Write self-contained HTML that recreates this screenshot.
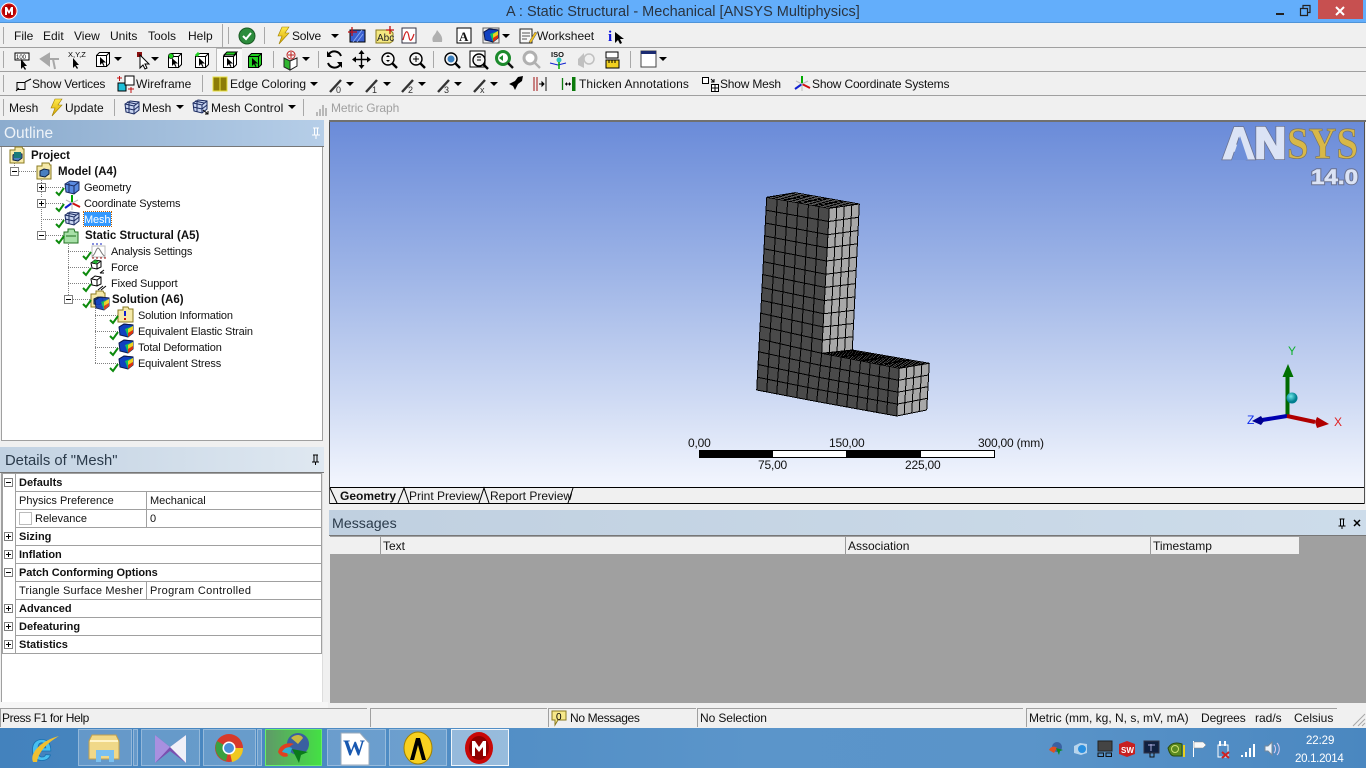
<!DOCTYPE html>
<html><head><meta charset="utf-8"><style>
html,body{margin:0;padding:0;width:1366px;height:768px;overflow:hidden;background:#f0f0f0;font-family:"Liberation Sans",sans-serif;font-size:12px;color:#111}
.a{position:absolute}
.t{position:absolute;white-space:nowrap;line-height:16px;font-size:12px}
.b{font-weight:bold}
.n{letter-spacing:-.15px}
.g{position:absolute;background:#a0a0a0}
.s{position:absolute;width:1px;background:#a8a8a8}
.c{position:absolute;background:#f0f0f0;border-top:1px solid #a0a0a0;border-left:1px solid #a0a0a0;height:18px;top:708px}
.r{position:absolute;height:1px;background:#a0a0a0;left:15px;width:307px}
.tb{position:absolute;top:729px;height:37px;box-sizing:border-box;border:1px solid rgba(255,255,255,.3);background:rgba(255,255,255,.17)}
</style></head><body>
<div class="a" style="left:0;top:0;width:1366px;height:23px;background:#63aefb;border-bottom:1px solid #4f94d8;box-sizing:border-box"></div>
<div class="t" style="left:506px;top:4px;font-size:14.5px;color:#2a3440">A : Static Structural - Mechanical [ANSYS Multiphysics]</div>
<div class="a" style="left:1318px;top:0;width:45px;height:19px;background:#c75050"></div>
<div class="a" style="left:0;top:47px;width:1366px;height:1px;background:#a0a0a0"></div>
<div class="a" style="left:0;top:71px;width:1366px;height:1px;background:#a0a0a0"></div>
<div class="a" style="left:0;top:95px;width:1366px;height:1px;background:#a0a0a0"></div>
<div class="a" style="left:329px;top:120px;width:1037px;height:2px;background:#707070"></div>
<div class="a" style="left:222px;top:24px;width:1px;height:23px;background:#a8a8a8"></div>
<div class="s" style="left:3px;top:27px;height:17px"></div><div class="s" style="left:228px;top:27px;height:17px"></div><div class="s" style="left:264px;top:27px;height:17px"></div>
<div class="s" style="left:3px;top:51px;height:17px"></div><div class="s" style="left:273px;top:51px;height:17px"></div><div class="s" style="left:318px;top:51px;height:17px"></div><div class="s" style="left:433px;top:51px;height:17px"></div><div class="s" style="left:630px;top:51px;height:17px"></div>
<div class="s" style="left:3px;top:75px;height:17px"></div><div class="s" style="left:202px;top:75px;height:17px"></div>
<div class="s" style="left:3px;top:99px;height:17px"></div><div class="s" style="left:114px;top:99px;height:17px"></div><div class="s" style="left:303px;top:99px;height:17px"></div>
<div class="a" style="left:216px;top:48px;width:26px;height:23px;background:#fafafa;border-left:1px solid #bbb;border-top:1px solid #bbb;box-sizing:border-box"></div>

<div class="t" style="left:14px;top:28px">File</div>
<div class="t" style="left:43px;top:28px">Edit</div>
<div class="t" style="left:74px;top:28px">View</div>
<div class="t" style="left:110px;top:28px">Units</div>
<div class="t" style="left:148px;top:28px">Tools</div>
<div class="t" style="left:188px;top:28px">Help</div>
<div class="t" style="left:292px;top:28px;letter-spacing:-.2px">Solve</div>
<div class="t" style="left:537px;top:28px">Worksheet</div>
<div class="t" style="left:32px;top:76px;letter-spacing:-.22px">Show Vertices</div>
<div class="t" style="left:136px;top:76px">Wireframe</div>
<div class="t" style="left:230px;top:76px">Edge Coloring</div>
<div class="t" style="left:579px;top:76px;letter-spacing:.1px">Thicken Annotations</div>
<div class="t" style="left:720px;top:76px;letter-spacing:-.2px">Show Mesh</div>
<div class="t" style="left:812px;top:76px;letter-spacing:-.18px">Show Coordinate Systems</div>
<div class="t" style="left:9px;top:100px">Mesh</div>
<div class="t" style="left:65px;top:100px">Update</div>
<div class="t" style="left:142px;top:100px">Mesh</div>
<div class="t" style="left:211px;top:100px;letter-spacing:.08px">Mesh Control</div>
<div class="t" style="left:331px;top:100px;color:#a0a0a0;letter-spacing:-.1px">Metric Graph</div>

<!-- Outline -->
<div class="a" style="left:0;top:120px;width:324px;height:27px;background:linear-gradient(90deg,#8cacce,#b6cee8);border-bottom:1px solid #777;box-sizing:border-box"></div>
<div class="t" style="left:4px;top:125px;font-size:15.500px;line-height:18px;color:#eef3f8">Outline</div>
<div class="a" style="left:1px;top:147px;width:322px;height:294px;background:#fff;border-left:1px solid #a0a0a0;border-right:1px solid #a0a0a0;border-bottom:1px solid #a0a0a0;box-sizing:border-box"></div>
<div class="a" style="left:84px;top:212px;width:27px;height:14px;background:#3399ff;outline:1px dotted #c06000;outline-offset:0"></div>
<div class="t b" style="left:31px;top:148px;font-size:11.500px">Project</div>
<div class="t b" style="left:58px;top:164px;font-size:11.500px">Model (A4)</div>
<div class="t n" style="left:84px;top:180px;font-size:11px">Geometry</div>
<div class="t n" style="left:84px;top:196px;font-size:11px">Coordinate Systems</div>
<div class="t n" style="left:84px;top:212px;font-size:11px;color:#fff">Mesh</div>
<div class="t b" style="left:85px;top:228px;font-size:11.500px">Static Structural (A5)</div>
<div class="t n" style="left:111px;top:244px;font-size:11px">Analysis Settings</div>
<div class="t n" style="left:111px;top:260px;font-size:11px">Force</div>
<div class="t n" style="left:111px;top:276px;font-size:11px">Fixed Support</div>
<div class="t b" style="left:112px;top:292px;font-size:11.500px">Solution (A6)</div>
<div class="t n" style="left:138px;top:308px;font-size:11px">Solution Information</div>
<div class="t n" style="left:138px;top:324px;font-size:11px">Equivalent Elastic Strain</div>
<div class="t n" style="left:138px;top:340px;font-size:11px">Total Deformation</div>
<div class="t n" style="left:138px;top:356px;font-size:11px">Equivalent Stress</div>

<!-- Details -->
<div class="a" style="left:0;top:447px;width:324px;height:26px;background:linear-gradient(90deg,#c2d2e2,#dfe8f1);border-bottom:1px solid #777;box-sizing:border-box"></div>
<div class="t" style="left:5px;top:452px;font-size:14.800px;line-height:18px;color:#2a3a4a">Details of "Mesh"</div>
<div class="a" style="left:1px;top:473px;width:322px;height:229px;background:#fff;border-left:1px solid #a0a0a0;border-right:1px solid #ddd;box-sizing:border-box"></div>
<div class="a" style="left:2px;top:473px;width:320px;height:1px;background:#a0a0a0"></div>
<div class="a" style="left:2px;top:653px;width:320px;height:1px;background:#a0a0a0"></div>
<div class="a" style="left:2px;top:473px;width:1px;height:181px;background:#a0a0a0"></div>
<div class="a" style="left:321px;top:473px;width:1px;height:181px;background:#a0a0a0"></div>
<div class="a" style="left:15px;top:473px;width:1px;height:181px;background:#a0a0a0"></div>
<div class="r" style="top:491px"></div><div class="r" style="top:509px"></div><div class="r" style="top:527px"></div><div class="r" style="top:545px"></div><div class="r" style="top:563px"></div><div class="r" style="top:581px"></div><div class="r" style="top:599px"></div><div class="r" style="top:617px"></div><div class="r" style="top:635px"></div>
<div class="a" style="left:146px;top:491px;width:1px;height:36px;background:#a0a0a0"></div>
<div class="a" style="left:146px;top:581px;width:1px;height:18px;background:#a0a0a0"></div>
<div class="a" style="left:19px;top:512px;width:11px;height:11px;border:1px solid #bbb"></div>
<div class="t b" style="left:19px;top:475px;font-size:11px">Defaults</div>
<div class="t" style="left:19px;top:493px;font-size:11px">Physics Preference</div>
<div class="t" style="left:150px;top:493px;font-size:11px">Mechanical</div>
<div class="t" style="left:35px;top:511px;font-size:11px">Relevance</div>
<div class="t" style="left:150px;top:511px;font-size:11px">0</div>
<div class="t b" style="left:19px;top:529px;font-size:11px">Sizing</div>
<div class="t b" style="left:19px;top:547px;font-size:11px">Inflation</div>
<div class="t b" style="left:19px;top:565px;font-size:11px;letter-spacing:-.05px">Patch Conforming Options</div>
<div class="t" style="left:19px;top:583px;font-size:11px;letter-spacing:.18px">Triangle Surface Mesher</div>
<div class="t" style="left:150px;top:583px;font-size:11px;letter-spacing:.33px">Program Controlled</div>
<div class="t b" style="left:19px;top:601px;font-size:11px">Advanced</div>
<div class="t b" style="left:19px;top:619px;font-size:11px">Defeaturing</div>
<div class="t b" style="left:19px;top:637px;font-size:11px">Statistics</div>

<!-- Viewport -->
<div class="a" style="left:329px;top:122px;width:1037px;height:382px;background:#f0f0f0"></div>
<div class="a" style="left:330px;top:122px;width:1034px;height:365px;background:linear-gradient(180deg,#6a8bd9 0%,#9cb3e6 40%,#cdd9f3 75%,#f3f6fe 100%)"></div>
<div class="a" style="left:329px;top:122px;width:1px;height:382px;background:#505050"></div>
<div class="a" style="left:1364px;top:122px;width:1px;height:382px;background:#505050"></div>
<div class="a" style="left:330px;top:488px;width:1034px;height:15px;background:#f0f0f0"></div>
<div class="a" style="left:330px;top:487px;width:1034px;height:1px;background:#000"></div>
<div class="a" style="left:330px;top:503px;width:1034px;height:1px;background:#000"></div>
<div class="t b" style="left:340px;top:488px;font-size:12px">Geometry</div>
<div class="t" style="left:409px;top:488px">Print Preview</div>
<div class="t" style="left:490px;top:488px">Report Preview</div>

<div class="t" style="left:688px;top:435px;letter-spacing:-.2px">0,00</div>
<div class="t" style="left:829px;top:435px;letter-spacing:-.2px">150,00</div>
<div class="t" style="left:978px;top:435px;letter-spacing:-.2px">300,00 (mm)</div>
<div class="t" style="left:758px;top:457px;letter-spacing:-.2px">75,00</div>
<div class="t" style="left:905px;top:457px;letter-spacing:-.2px">225,00</div>
<div class="a" style="left:699px;top:450px;width:296px;height:8px;box-sizing:border-box;background:#fff;border:1px solid #000"></div>
<div class="a" style="left:699px;top:450px;width:74px;height:8px;background:#000"></div>
<div class="a" style="left:846px;top:450px;width:75px;height:8px;background:#000"></div>

<!-- Messages -->
<div class="a" style="left:329px;top:510px;width:1037px;height:26px;background:linear-gradient(90deg,#c0d0e0,#cddcea);border-bottom:1px solid #777;box-sizing:border-box"></div>
<div class="t" style="left:332px;top:515px;font-size:14.200px;line-height:18px;color:#2a3a4a">Messages</div>
<div class="a" style="left:330px;top:536px;width:1036px;height:167px;background:#a0a0a0"></div>
<div class="a" style="left:330px;top:537px;width:969px;height:17px;background:#f0f0f0"></div>
<div class="a" style="left:380px;top:537px;width:1px;height:17px;background:#999"></div>
<div class="a" style="left:845px;top:537px;width:1px;height:17px;background:#999"></div>
<div class="a" style="left:1150px;top:537px;width:1px;height:17px;background:#999"></div>
<div class="t" style="left:383px;top:538px">Text</div>
<div class="t" style="left:848px;top:538px">Association</div>
<div class="t" style="left:1153px;top:538px">Timestamp</div>

<!-- Status -->
<div class="a" style="left:0;top:702px;width:328px;height:6px;background:#f6f6f6"></div>
<div class="c" style="left:0;width:366px"></div>
<div class="c" style="left:370px;width:176px"></div>
<div class="c" style="left:548px;width:147px"></div>
<div class="c" style="left:697px;width:325px"></div>
<div class="c" style="left:1026px;width:310px"></div>
<div class="t" style="left:2px;top:710px;letter-spacing:-.38px">Press F1 for Help</div>
<div class="t" style="left:570px;top:710px;letter-spacing:-.35px">No Messages</div>
<div class="t" style="left:700px;top:710px;letter-spacing:-.1px">No Selection</div>
<div class="t" style="left:1029px;top:710px">Metric (mm, kg, N, s, mV, mA)</div>
<div class="t" style="left:1201px;top:710px;letter-spacing:-.1px">Degrees</div>
<div class="t" style="left:1255px;top:710px">rad/s</div>
<div class="t" style="left:1294px;top:710px">Celsius</div>

<!-- Taskbar -->
<div class="a" style="left:0;top:728px;width:1366px;height:40px;background:linear-gradient(90deg,#4382bd 0%,#4f8cc4 30%,#5b95ca 55%,#5a94c9 75%,#4a87c0 100%)"></div>
<div class="tb" style="left:78px;width:54px"></div><div class="tb" style="left:133px;width:5px"></div>
<div class="tb" style="left:141px;width:59px"></div>
<div class="tb" style="left:203px;width:53px"></div><div class="tb" style="left:257px;width:5px"></div>
<div class="tb" style="left:265px;width:57px;background:linear-gradient(90deg,#5f9a68,#44e044);border:1px solid #66f066"></div>
<div class="tb" style="left:327px;width:59px"></div>
<div class="tb" style="left:389px;width:58px"></div>
<div class="tb" style="left:451px;width:58px;background:rgba(255,255,255,.4);border-color:rgba(255,255,255,.85)"></div>
<div class="t" style="left:1306px;top:733px;color:#fff;font-size:11.500px;letter-spacing:-.1px">22:29</div>
<div class="t" style="left:1295px;top:751px;color:#fff;font-size:11.500px;letter-spacing:-.3px">20.1.2014</div>

<svg class="a" style="left:0;top:0" width="1366" height="768" viewBox="0 0 1366 768" xmlns="http://www.w3.org/2000/svg">
<defs>
<linearGradient id="lz" x1="0" y1="0" x2="0" y2="1"><stop offset="0" stop-color="#ffe94d"/><stop offset="1" stop-color="#d8a800"/></linearGradient>
<radialGradient id="ball" cx=".4" cy=".35"><stop offset="0" stop-color="#6fe8e8"/><stop offset="1" stop-color="#007f8f"/></radialGradient>
<symbol id="box" overflow="visible"><path d="M1.500 4.500h10v11h-10zM1.500 4.500l3-3h10v11l-3 3M11.500 4.500l3-3" fill="#fff" stroke="#000"/><path d="M5 6v8l2-2 1.500 3 1-.5-1.500-3h3z"/></symbol>
<symbol id="arrow" overflow="visible"><path d="M0 0h8l-4 4z"/></symbol>
<symbol id="bolt" overflow="visible"><path d="M6 0h7L9 6h4L3 17l3-8H2z" fill="url(#lz)" stroke="#a08000" stroke-width=".6"/></symbol>
<symbol id="ck" overflow="visible"><path d="M0 4l3 3 5-7" fill="none" stroke="#0c8a0c" stroke-width="2"/></symbol>
<symbol id="cube" overflow="visible"><path d="M1 4l5-3 9 1v8l-5 4-8-2z" fill="#5a8ae0" stroke="#1a2a60"/><path d="M1 4l9 2 5-4M10 6v8M5 3v10" fill="none" stroke="#1a2a60"/></symbol>
<symbol id="mcube" overflow="visible"><path d="M1 4l5-3 9 1v8l-5 4-8-2z" fill="#c8d4f0" stroke="#1a2a60"/><path d="M1 4l9 2 5-4M10 6v8M5 3v10M1 8l9 2 5-4M3 2l9 2" fill="none" stroke="#1a2a60"/></symbol>
<symbol id="rain" overflow="visible"><path d="M1 4l5-3 9 1v8l-5 4-8-2z" fill="#1040c0" stroke="#0a1850"/><path d="M7 6l8-3v7l-5 4z" fill="#10c060"/><path d="M10 6l5-3v4l-5 3z" fill="#f0d020"/><path d="M10 10l5-3v3l-5 4z" fill="#e03010"/><path d="M1 4l5-3 9 1" fill="none" stroke="#0a1850"/></symbol>
<symbol id="fold" overflow="visible"><path d="M0 3h5V0h7l1 2h1v14H0z" fill="#f5e9a8" stroke="#8a7a20"/><path d="M3 8l4-2 5 1v4l-4 3-5-1z" fill="#4a80c0" stroke="#102040"/></symbol>
<symbol id="plus" overflow="visible"><rect x=".5" y=".5" width="8" height="8" fill="#fff" stroke="#808080"/><path d="M2 4.500h5M4.500 2v5" stroke="#000"/></symbol>
<symbol id="minus" overflow="visible"><rect x=".5" y=".5" width="8" height="8" fill="#fff" stroke="#808080"/><path d="M2 4.500h5" stroke="#000"/></symbol>
<symbol id="mag" overflow="visible"><circle cx="7" cy="7" r="6" fill="#f4f4f4" stroke="#000" stroke-width="1.400"/><path d="M11 11l5 5" stroke="#000" stroke-width="2.400"/></symbol>
<symbol id="slash" overflow="visible"><path d="M1 15L12 3" stroke="#333" stroke-width="2.400"/></symbol>
<symbol id="triad" overflow="visible"><path d="M8 8V0" stroke="#0a0" stroke-width="2"/><path d="M8 8l8 4" stroke="#d01010" stroke-width="2"/><path d="M8 8l-7 5" stroke="#1020d0" stroke-width="2"/><path d="M8 8l-6-3M8 8l6-3M8 8v7" stroke="#bbb"/></symbol>
</defs>

<!-- title -->
<circle cx="9" cy="11" r="8" fill="#d01010" stroke="#fff" stroke-width="1"/><circle cx="9" cy="11" r="6" fill="#b00000"/><path d="M5 15V7h2l2 4 2-4h2v8h-2v-4l-2 3-2-3v4z" fill="#fff"/>
<rect x="1276" y="13" width="8" height="2" fill="#222"/>
<path d="M1300.500 8.500h7v7h-7zM1303 8V5.500h7v7H1308" fill="none" stroke="#222" stroke-width="1.200"/>
<path d="M1336 7l8 8M1344 7l-8 8" stroke="#fff" stroke-width="2"/>

<!-- row 1 -->
<circle cx="247" cy="36" r="8" fill="#2c8c3c" stroke="#1a5a24"/><path d="M243 36l3 3 5-6" fill="none" stroke="#fff" stroke-width="2"/>
<use href="#bolt" x="276" y="27"/><use href="#arrow" x="331" y="34"/>
<rect x="350" y="30" width="15" height="12" fill="#3a60d0" stroke="#000"/><path d="M353 42l9-12M357 42l6-8" stroke="#8aa8f0"/><path d="M348 32h9M352 27v9" stroke="#c01010" stroke-width="1.300"/>
<path d="M376 30h14l3 3v8l-3 2h-14z" fill="#f4e880" stroke="#8a7a20"/><text x="377" y="41" font-size="10" font-family="Liberation Sans" fill="#222">Abc</text><path d="M386 30h8M390 26v8" stroke="#c01010" stroke-width="1.300"/>
<rect x="402" y="28" width="14" height="15" fill="#fff" stroke="#334"/><path d="M403 40c3-12 5-9 6-3s3 3 5-3" fill="none" stroke="#d02020" stroke-width="1.200"/>
<path d="M433 42c-2-6 2-6 4-12 3 4 6 6 5 12z" fill="#b0b0b0"/>
<rect x="457" y="28" width="14" height="15" fill="#fff" stroke="#000"/><text x="459" y="41" font-size="13" font-weight="bold" font-family="Liberation Serif" fill="#111">A</text>
<use href="#rain" x="483" y="28"/><rect x="483" y="28" width="16" height="15" fill="none" stroke="#000" opacity=".6"/><use href="#arrow" x="502" y="34"/>
<rect x="520" y="29" width="12" height="14" fill="#f8f8f8" stroke="#222"/><path d="M522 33h8M522 36h8M522 39h5" stroke="#555"/><path d="M529 42l6-10 2 1-6 10z" fill="#f0c020" stroke="#555" stroke-width=".5"/>
<text x="608" y="41" font-size="15" font-weight="bold" font-family="Liberation Serif" fill="#1018e0">i</text>
<path d="M615 32v11l3-3 2 4 2-1-2-4h4z" fill="#000"/>

<!-- row 2 -->
<rect x="15" y="53" width="14" height="7" fill="#fff" stroke="#000"/><text x="16" y="59" font-size="6" font-family="Liberation Sans" fill="#000">100</text><path d="M21 59v10l2-2 2 3 1-1-2-3h3z"/>
<path d="M41 59l8-5v11zM49 59h10M53 59l2 10" fill="#a8a8a8" stroke="#a8a8a8" stroke-width="2"/>
<text x="68" y="57" font-size="7.500" font-family="Liberation Sans" fill="#000">X,Y,Z</text><path d="M73 58v10l2-2 2 3 1-1-2-3h3z"/>
<use href="#box" x="95" y="51"/><use href="#arrow" x="114" y="57"/>
<rect x="137" y="52" width="5" height="5" fill="#8a1010"/><path d="M140 55v13l3-3 2 4 2-1-2-4h4z" fill="#fff" stroke="#000"/><use href="#arrow" x="151" y="57"/>
<use href="#box" x="167" y="52"/><circle cx="171" cy="56" r="2.600" fill="#20d020" stroke="#000" stroke-width=".6"/>
<use href="#box" x="194" y="52"/><path d="M196 56l3-3" stroke="#20d020" stroke-width="3"/>
<use href="#box" x="222" y="52"/><path d="M224 55l3-3h10l-3 3z" fill="#20d020" stroke="#000"/>
<path d="M248.500 56.500h10v11h-10zM248.500 56.500l3-3h10v11l-3 3M258.500 56.500l3-3" fill="#22d022" stroke="#000"/><path d="M252 58v8l2-2 1.500 3 1-.5-1.500-3h3z"/>
<path d="M284 58l6 3 7-3v8l-7 4-6-3z" fill="#2fb52f" stroke="#222"/><path d="M290 61v9l7-4v-8z" fill="#fff" stroke="#222"/><circle cx="291" cy="55" r="4" fill="none" stroke="#c02020"/><path d="M288 55h6M291 52v6" stroke="#c02020"/>
<use href="#arrow" x="302" y="57"/>
<path d="M341 56a7 7 0 0 0-12-2M328 63a7 7 0 0 0 12 2" fill="none" stroke="#000" stroke-width="2"/><path d="M327 51v6h5zM342 68v-6h-5z"/>
<path d="M361.500 52v15M354 59.500h15" stroke="#000" stroke-width="1.400"/><path d="M361.500 50l-3 4h6zM361.500 69l-3-4h6zM352 59.500l4-3v6zM371 59.500l-4-3v6z"/>
<use href="#mag" x="381" y="52"/><path d="M388 55l-2 2h4zM388 62l-2-2h4z"/>
<use href="#mag" x="409" y="52"/><path d="M413 59h6M416 56v6" stroke="#000"/>
<use href="#mag" x="444" y="52"/><circle cx="451" cy="59" r="3.500" fill="#3a80c0"/>
<rect x="470" y="51" width="15" height="16" fill="#fff" stroke="#000"/><use href="#mag" x="472" y="53"/><path d="M477 57h4M477 60h4" stroke="#000"/>
<circle cx="503" cy="58" r="6.500" fill="#fff" stroke="#1c8a2c" stroke-width="3"/><path d="M499 58l4-3v6z" fill="#1c8a2c"/><path d="M508 63l5 5" stroke="#111" stroke-width="2.400"/>
<circle cx="530" cy="58" r="6" fill="#fff" stroke="#b0b0b0" stroke-width="3"/><path d="M535 63l5 5" stroke="#b0b0b0" stroke-width="2.400"/>
<text x="551" y="57" font-size="7.500" font-weight="bold" font-family="Liberation Sans" fill="#111">ISO</text><circle cx="559" cy="60" r="2.500" fill="#30c0c0"/><path d="M550 63l8 2 8-2" fill="none" stroke="#1020d0"/><path d="M559 62v7" stroke="#0a0" stroke-width="1.500"/>
<path d="M578 59l6-6v15l-6-3z" fill="#c0c0c0"/><circle cx="589" cy="59" r="5" fill="none" stroke="#c0c0c0" stroke-width="1.500"/>
<rect x="606" y="52" width="12" height="6" fill="#fff" stroke="#000"/><rect x="606" y="60" width="13" height="8" fill="#f0d020" stroke="#000"/><path d="M609 60v3M612 60v3M615 60v3" stroke="#000"/>
<rect x="641" y="51" width="15" height="16" fill="#fff" stroke="#444"/><rect x="641" y="51" width="15" height="3" fill="#1a2a70"/><use href="#arrow" x="659" y="57"/>

<!-- row 3 -->
<path d="M17 82.500h8v7h-8zM25 82l6-3" fill="none" stroke="#000"/><path d="M16 91l3-3" stroke="#000"/>
<rect x="118" y="83" width="8" height="8" fill="#20c0d8" stroke="#000"/><rect x="125" y="76" width="9" height="9" fill="#fff" stroke="#000"/><path d="M117 78h5M119.500 76v5M128 89h6M131 87v6" stroke="#c01010"/>
<rect x="213" y="77" width="14" height="14" fill="#8c7c08" stroke="#e8e040"/><path d="M220 77v14" stroke="#e8e040"/><use href="#arrow" x="310" y="82"/>
<use href="#slash" x="329" y="77"/><text x="336" y="93" font-size="9" fill="#333" font-family="Liberation Sans">0</text><use href="#arrow" x="346" y="82"/>
<use href="#slash" x="365" y="77"/><text x="372" y="93" font-size="9" fill="#333" font-family="Liberation Sans">1</text><use href="#arrow" x="383" y="82"/>
<use href="#slash" x="401" y="77"/><text x="408" y="93" font-size="9" fill="#333" font-family="Liberation Sans">2</text><use href="#arrow" x="418" y="82"/>
<use href="#slash" x="437" y="77"/><text x="444" y="93" font-size="9" fill="#333" font-family="Liberation Sans">3</text><use href="#arrow" x="454" y="82"/>
<use href="#slash" x="473" y="77"/><text x="480" y="93" font-size="9" fill="#333" font-family="Liberation Sans">x</text><use href="#arrow" x="490" y="82"/>
<path d="M508 92l5-6-4-2 6-3 3-4 5-1-1 5-4 3-3 6-2-4z" fill="#000"/>
<path d="M534 77v14M537 77v14" stroke="#a01010"/><path d="M539 84h5M544 84l-2-2v4z" stroke="#000"/><path d="M546 77v14" stroke="#111"/>
<path d="M562.500 78v12" stroke="#0a7a0a" stroke-width="1.300"/><path d="M565 84h6" stroke="#000"/><path d="M565 84l2-2v4zM571 84l-2-2v4z"/><rect x="572" y="77" width="3.500" height="14" fill="#0a7a0a"/>
<rect x="702.500" y="77.500" width="6" height="6" fill="#fff" stroke="#000"/><path d="M711 79l3 3m0-3v3h-3" fill="none" stroke="#000"/><rect x="711.500" y="84.500" width="7" height="7" fill="#fff" stroke="#000"/><path d="M715 85v6M712 88h6" stroke="#000"/>
<use href="#triad" x="794" y="76"/>

<!-- row 4 -->
<use href="#bolt" x="49" y="99"/>
<use href="#mcube" x="124" y="100"/><use href="#arrow" x="176" y="105"/>
<use href="#mcube" x="192" y="99"/><path d="M203 110l5 4m0-3v3h-3" fill="none" stroke="#000"/><use href="#arrow" x="288" y="105"/>
<path d="M317 116v-4M320 116v-7M323 116v-11M326 116v-8" stroke="#b8b8b8" stroke-width="2"/>

<!-- tree -->
<g fill="none" stroke="#808080" stroke-dasharray="1 1">
<path d="M14.500 161v6M19 171.500h17M41.500 178v5M41.500 192v6M41.500 207v24M46 187.500h18M46 203.500h18M41 219.500h23M46 235.500h18"/>
<path d="M68.500 242v53M68 251.500h22M68 267.500h22M68 283.500h22M73 299.500h18"/>
<path d="M95.500 306v57.500M95 315.500h23M95 331.500h23M95 347.500h23M95 363.500h23"/>
</g>
<use href="#fold" x="10" y="147"/><rect x="14" y="152" width="7" height="6" fill="#1a7a7a"/>
<use href="#minus" x="10" y="167"/><use href="#fold" x="37" y="163"/>
<use href="#plus" x="37" y="183"/><use href="#cube" x="64" y="180"/><use href="#ck" x="56" y="188"/>
<use href="#plus" x="37" y="199"/><use href="#triad" x="64" y="195"/><use href="#ck" x="56" y="204"/>
<use href="#mcube" x="64" y="211"/><use href="#ck" x="56" y="220"/>
<use href="#minus" x="37" y="231"/>
<path d="M64 232h4v-3h6l1 3h3v11H64z" fill="#a8e0a8" stroke="#207020"/><path d="M66 236h10" stroke="#207020"/><use href="#ck" x="56" y="236"/>
<path d="M92 256c3 0 4-8 6-8s4 8 7 8" fill="none" stroke="#777"/><path d="M92 244h12" stroke="#1020c0" stroke-dasharray="2 2"/><path d="M92 258h14" stroke="#a01010" stroke-dasharray="2 2"/><rect x="92" y="246" width="13" height="11" fill="none" stroke="#bbb"/><use href="#ck" x="83" y="252"/>
<path d="M91 263l4-3 6 1v6l-4 2-5-1z" fill="#fff" stroke="#000"/><path d="M100 273l4-3m0 3h-4" stroke="#000"/><path d="M92 263l5 1 4-3M97 264v5" fill="none" stroke="#000"/><path d="M92 262l3-2 4 1-3 3z" fill="#20b030"/><use href="#ck" x="83" y="268"/>
<path d="M91 279l4-3 6 1v7l-4 2-5-1z" fill="#fff" stroke="#000"/><path d="M92 279l5 1 4-3M97 280v6M98 290l5-4M101 290l5-4" fill="none" stroke="#000"/><use href="#ck" x="83" y="284"/>
<use href="#minus" x="64" y="295"/><use href="#fold" x="91" y="291"/><use href="#rain" x="94" y="296" opacity=".9"/><use href="#ck" x="83" y="300"/>
<path d="M118 310h5v-3h5l1 2h4v13h-15z" fill="#f5e9a8" stroke="#8a7a20"/><path d="M125 311v5" stroke="#1020d0" stroke-width="2"/><path d="M125 318v2" stroke="#c01010" stroke-width="2"/><use href="#ck" x="110" y="316"/>
<use href="#rain" x="118" y="323"/><use href="#ck" x="110" y="332"/>
<use href="#rain" x="118" y="339"/><use href="#ck" x="110" y="348"/>
<use href="#rain" x="118" y="355"/><use href="#ck" x="110" y="364"/>

<!-- pins -->
<path d="M313 128h6M314.500 128v7h3v-7M312 135h8M316 135v4" stroke="#fff" fill="none"/>
<path d="M313 455h5M314 455v7h3v-7M312 462h7M315.500 462v3" stroke="#000" fill="none"/>
<path d="M1339.500 519h5M1340.500 519v7h3v-7M1338.500 526h7M1342 526v3" stroke="#000" fill="none"/>
<path d="M1354 520l6 6M1360 520l-6 6" stroke="#000" stroke-width="1.500"/>

<!-- detail expanders -->
<use href="#minus" x="4" y="478"/><use href="#plus" x="4" y="532"/><use href="#plus" x="4" y="550"/><use href="#minus" x="4" y="568"/><use href="#plus" x="4" y="604"/><use href="#plus" x="4" y="622"/><use href="#plus" x="4" y="640"/>

<!-- tabs -->
<path d="M330 488l7 15M398 503l6-15 5 15M479 503l5-15 5 15M568 503l5-15" fill="none" stroke="#000"/>

<!-- mesh -->
<g id="mesh" stroke="#000" stroke-width="1" fill="none" shape-rendering="crispEdges"></g>

<!-- logo -->
<text x="1223" y="158" font-size="44" font-weight="bold" font-family="Liberation Sans" fill="#6a7290" stroke="#6a7290" stroke-width="4" textLength="63" lengthAdjust="spacingAndGlyphs">AN</text>
<text x="1223" y="158" font-size="44" font-weight="bold" font-family="Liberation Sans" fill="#dbe3f5" stroke="#dbe3f5" stroke-width="2.400" textLength="63" lengthAdjust="spacingAndGlyphs">AN</text>
<path d="M1240 136l-8 24h16z" fill="#6e8fd9"/>
<text x="1287" y="158" font-size="44" font-weight="bold" font-family="Liberation Serif" fill="#d8b848" stroke="#7a7460" stroke-width=".7" textLength="71" lengthAdjust="spacingAndGlyphs">SYS</text>
<text x="1311" y="184" font-size="21" font-weight="bold" font-family="Liberation Sans" fill="#6a7290" stroke="#6a7290" stroke-width="2.400" textLength="47" lengthAdjust="spacingAndGlyphs">14.0</text>
<text x="1311" y="184" font-size="21" font-weight="bold" font-family="Liberation Sans" fill="#dbe3f5" stroke="#dbe3f5" stroke-width=".6" textLength="47" lengthAdjust="spacingAndGlyphs">14.0</text>

<!-- triad -->
<text x="1288" y="355" font-size="12" fill="#10b030" font-family="Liberation Sans">Y</text>
<path d="M1287.500 416V376" stroke="#006a00" stroke-width="4"/><path d="M1288 364l-5.500 13h11z" fill="#007000"/>
<path d="M1287 416l-25 4" stroke="#0000b0" stroke-width="4"/><path d="M1252 421l9-5 3 5-3 4z" fill="#000090"/>
<path d="M1287 416l28 6" stroke="#b00000" stroke-width="4"/><path d="M1329 424l-12-7-2 5 2 6z" fill="#b00000"/>
<circle cx="1292" cy="398" r="5.500" fill="url(#ball)"/>
<text x="1247" y="424" font-size="12" fill="#1030f0" font-family="Liberation Sans">Z</text>
<text x="1334" y="426" font-size="12" fill="#e02020" font-family="Liberation Sans">X</text>

<!-- status icons -->
<path d="M552 711h14v9h-8l-3 5v-5h-3z" fill="#f6e88a" stroke="#8a7a20"/><text x="556" y="720" font-size="10" fill="#000" font-family="Liberation Sans">0</text>
<path d="M1353 726l12-12M1358 726l7-7M1362 726l3-3" stroke="#a8a8a8"/>

<!-- taskbar icons -->
<text x="31" y="760" font-size="38" font-weight="bold" font-family="Liberation Sans" fill="#48c0f0" stroke="#1870b0" stroke-width=".8">e</text>
<path d="M33 762c-4-10 10-22 26-26-10 6-20 14-22 26z" fill="#f0c030"/>
<path d="M89 741l3-6h24l3 6v18H89z" fill="#f0d888" stroke="#c0a050"/><path d="M90 741h28" stroke="#fff4c8" stroke-width="2"/><path d="M96 750h18v12h-5v-6h-8v6h-5z" fill="#7ac0f0"/>
<path d="M155 735l15 12 16-12v28l-16-12-15 12z" fill="#7a50b0"/><path d="M155 735l15 12-15 16z" fill="#a890e0"/><path d="M186 735l-16 12 16 16z" fill="#f0f0f8"/>
<circle cx="229" cy="748" r="14" fill="#d83a2a"/><path d="M229 748L217 741a14 14 0 0 0 9 20z" fill="#3aa040"/><path d="M229 748l3 14a14 14 0 0 0 11-14z" fill="#f0c820"/><circle cx="229" cy="748" r="6.500" fill="#fff"/><circle cx="229" cy="748" r="5" fill="#4a90d8"/>
<circle cx="298" cy="744" r="11" fill="#3a60a0"/><path d="M291 738c4-4 10-4 12 0l-5 6z" fill="#c8b840"/><path d="M278 752c2-8 10-10 16-8-6 2-8 8-6 12-4 2-8 0-10-4z" fill="#e04020"/><path d="M282 752c2-4 6-6 10-4l-2 6z" fill="#30b0d0"/><path d="M292 749l16 3-7 3-2 8z" fill="#0a7a1a"/>
<path d="M341 733h19l9 10v22h-28z" fill="#fff" stroke="#9ab"/><text x="343" y="755" font-size="22" font-weight="bold" font-family="Liberation Serif" fill="#1858b0">W</text>
<ellipse cx="418" cy="748" rx="14" ry="16" fill="#f8d020" stroke="#a08000"/><path d="M410 760l6-22h4l6 22h-4l-4-15-4 15z"/>
<ellipse cx="479" cy="748" rx="14" ry="16" fill="#c80808"/><ellipse cx="479" cy="748" rx="10" ry="12" fill="#900000"/><path d="M472 756v-15h3l4 6 4-6h3v15h-3v-9l-4 5-4-5v9z" fill="#fff"/>

<!-- tray -->
<circle cx="1057" cy="747" r="5" fill="#3a60a0"/><path d="M1049 750c2-4 6-4 8-2l-3 5z" fill="#e05020"/><path d="M1056 748l7 2-3 1-1 4z" fill="#0a8a1a"/>
<path d="M1074 746l6-3 7 1v9l-6 2-7-2z" fill="#b8d4ec"/><circle cx="1082" cy="749" r="4" fill="#2a90e0"/>
<rect x="1098" y="741" width="14" height="10" fill="#444" stroke="#222"/><rect x="1098" y="753" width="5.500" height="3.500" fill="none" stroke="#111"/><rect x="1106" y="753" width="5.500" height="3.500" fill="none" stroke="#111"/>
<path d="M1119 744l8-3 8 3v10l-8 3-8-3z" fill="#c82020"/><text x="1121" y="753" font-size="8" font-weight="bold" fill="#fff" font-family="Liberation Sans">SW</text>
<rect x="1144" y="741" width="15" height="12" fill="#102040" stroke="#334"/><path d="M1148 745h7M1151 744v7" stroke="#aad"/><path d="M1150 753v4h4v-4" stroke="#111" fill="none"/>
<path d="M1168 748c3-5 8-6 14-4v12h-8c-3 0-5-4-6-8z" fill="#5a8a20" stroke="#2a4a10"/><circle cx="1175" cy="749" r="3.500" fill="none" stroke="#cde070"/><path d="M1184 745v12" stroke="#e8d020" stroke-width="2"/>
<path d="M1193.500 741v16" stroke="#fff"/><path d="M1194 742h9l3 3-3 3h-9z" fill="#f8f8f8" stroke="#888" stroke-width=".5"/>
<rect x="1218" y="745" width="10" height="12" fill="none" stroke="#fff"/><path d="M1220 741v5M1225 741v5" stroke="#fff" stroke-width="2"/><path d="M1222 752l7 6m0-6l-7 6" stroke="#d02020" stroke-width="2"/>
<path d="M1241 755h2v2h-2zM1245 752h2v5h-2zM1249 748h2v9h-2zM1253 744h2v13h-2z" fill="#fff"/>
<path d="M1265 746h3l4-4v13l-4-4h-3z" fill="#eaf2fa" stroke="#789"/><path d="M1274 745c2 2 2 6 0 8M1277 743c3 3 3 9 0 12" fill="none" stroke="#dce"/>
</svg>
<script>
(function(){
var m=document.getElementById('mesh'),n='http://www.w3.org/2000/svg';
function P(a,b,c,d,u,v,f){
 var s='M'+a+'L'+b+'L'+c+'L'+d+'Z',p=document.createElementNS(n,'path');
 p.setAttribute('d',s);p.setAttribute('fill',f);p.setAttribute('stroke','none');m.appendChild(p);
 var l='',i,t;
 function L(x,y,t){return [x[0]+(y[0]-x[0])*t,x[1]+(y[1]-x[1])*t]}
 for(i=0;i<=u;i++){t=i/u;var e=L(a,b,t),g=L(d,c,t);l+='M'+e+'L'+g}
 for(i=0;i<=v;i++){t=i/v;var e2=L(a,d,t),g2=L(b,c,t);l+='M'+e2+'L'+g2}
 var q=document.createElementNS(n,'path');q.setAttribute('d',l);m.appendChild(q);
}
var tl=[766.7,197.3],tr=[829.3,208.3],inn=[821.7,353.3],lb=[759.4,339],bl=[756.7,390],bm=[816.7,401.5],fr=[899.3,368.3],br=[896.7,416];
P(tl,[795,192.7],[859.3,204],tr,6,4,'#8e8e8e');
P(inn,[852.3,350],[929.3,363.3],fr,8,4,'#8e8e8e');
P(tl,tr,inn,lb,6,11,'#4a4a4a');
P(lb,inn,bm,bl,6,4,'#4a4a4a');
P(inn,fr,br,bm,8,4,'#4a4a4a');
P(tr,[859.3,204],[852.3,350],inn,4,11,'#a8a8a8');
P(fr,[929.3,363.3],[926.7,410],br,4,4,'#a8a8a8');
})();
</script>
</body></html>
